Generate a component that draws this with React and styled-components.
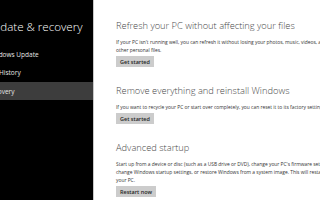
import React from 'react';
import styled, { createGlobalStyle } from 'styled-components';

const Global = createGlobalStyle`
  html, body {
    margin: 0;
    padding: 0;
    width: 320px;
    height: 200px;
    overflow: hidden;
    background: #fff;
  }
  * { box-sizing: border-box; }
`;

const Screen = styled.div`
  display: flex;
  width: 320px;
  height: 200px;
  overflow: hidden;
  font-family: "Open Sans", "Noto Sans", sans-serif;
`;

const Sidebar = styled.aside`
  flex: 0 0 94px;
  height: 100%;
  background: #000;
  border-right: 1px solid #c8c8c8;
  padding-top: 16px;
  overflow: hidden;
`;

const SideInner = styled.div`
  margin-left: -15px;
`;

const TitleRow = styled.div`
  display: flex;
  align-items: center;
  gap: 12px;
  height: 20px;
  margin-bottom: 9px;
`;

const Title = styled.h1`
  flex: none;
  margin: 0;
  font-size: 11.6px;
  font-weight: 300;
  color: #fff;
  white-space: nowrap;
`;

const MenuItem = styled.div`
  display: flex;
  align-items: center;
  height: 18px;
  padding-left: 2px;
  font-size: 6.5px;
  color: #e6e6e6;
  white-space: nowrap;
  background: ${({ active }) => (active ? '#3d3d3d' : 'transparent')};
  margin-top: ${({ active }) => (active ? '1px' : '0')};
`;

const Main = styled.main`
  flex: 1;
  padding: 19px 0 0 22px;
  overflow: hidden;
`;

const Section = styled.section`
  margin-bottom: 17px;
  width: 217px;
`;

const Heading = styled.h2`
  margin: 0;
  font-size: 9.3px;
  line-height: 14px;
  font-weight: 300;
  color: #4a4a4a;
  white-space: nowrap;
`;

const Text = styled.p`
  margin: 5px 0 0;
  font-size: 4.9px;
  line-height: 8px;
  color: #333;
`;

const Button = styled.div`
  display: flex;
  align-items: center;
  justify-content: center;
  height: 11px;
  width: ${({ w }) => w || 38}px;
  margin-top: 2px;
  background: #cccccc;
  color: #1e1e1e;
  font-size: 5.5px;
  font-weight: 600;
`;

const SearchIcon = () => (
  <svg width="7" height="7" viewBox="0 0 10 10">
    <circle cx="6.2" cy="3.8" r="2.6" fill="none" stroke="#fff" strokeWidth="1.3" />
    <line x1="4.3" y1="5.7" x2="1.2" y2="8.8" stroke="#fff" strokeWidth="1.5" />
  </svg>
);

const sections = [
  {
    title: 'Refresh your PC without affecting your files',
    text: "If your PC isn't running well, you can refresh it without losing your photos, music, videos, and other personal files.",
    button: 'Get started',
    w: 38,
  },
  {
    title: 'Remove everything and reinstall Windows',
    text: 'If you want to recycle your PC or start over completely, you can reset it to its factory settings.',
    button: 'Get started',
    w: 38,
  },
  {
    title: 'Advanced startup',
    text: "Start up from a device or disc (such as a USB drive or DVD), change your PC's firmware settings, change Windows startup settings, or restore Windows from a system image. This will restart your PC.",
    button: 'Restart now',
    w: 40,
  },
];

export default function App() {
  return (
    <>
      <Global />
      <Screen>
        <Sidebar>
          <SideInner>
            <TitleRow>
              <Title>Update &amp; recovery</Title>
              <SearchIcon />
            </TitleRow>
            <MenuItem>Windows Update</MenuItem>
            <MenuItem>File History</MenuItem>
            <MenuItem active>Recovery</MenuItem>
          </SideInner>
        </Sidebar>
        <Main>
          {sections.map((s, i) => (
            <Section key={i}>
              <Heading>{s.title}</Heading>
              <Text>{s.text}</Text>
              <Button w={s.w}>{s.button}</Button>
            </Section>
          ))}
        </Main>
      </Screen>
    </>
  );
}
